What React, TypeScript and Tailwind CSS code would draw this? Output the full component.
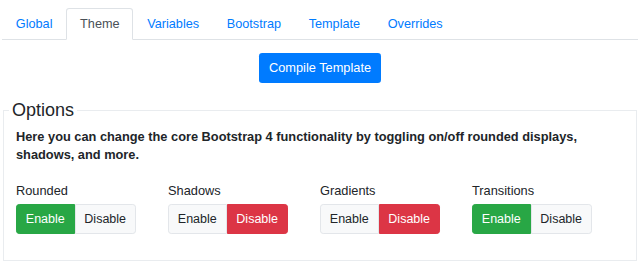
import React from "react";

const font = { fontFamily: '"Liberation Sans", Arial, sans-serif' };

function Group({ label, enabled }: { label: string; enabled: boolean }) {
  return (
    <div className="flex flex-col">
      <div className="text-[12.8px] leading-[19px] text-[#212529] mb-[4px]">{label}</div>
      <div className="flex">
        <button
          className={
            "h-[30px] px-[8.8px] text-[12.5px] rounded-l-[3.2px] border " +
            (enabled
              ? "bg-[#28a745] border-[#28a745] text-white"
              : "bg-[#f8f9fa] border-[#e3e6ea] text-[#212529]")
          }
        >
          Enable
        </button>
        <button
          className={
            "h-[30px] px-[8.8px] text-[12.5px] rounded-r-[3.2px] border " +
            (!enabled
              ? "bg-[#dc3545] border-[#dc3545] text-white"
              : "bg-[#f8f9fa] border-[#e3e6ea] text-[#212529]")
          }
        >
          Disable
        </button>
      </div>
    </div>
  );
}

export default function App() {
  const tabs = ["Global", "Theme", "Variables", "Bootstrap", "Template", "Overrides"];
  return (
    <div className="w-[640px] h-[264px] bg-white overflow-hidden px-[2px] pt-[8px]" style={font}>
      <div className="flex border-b border-[#dee2e6]">
        {tabs.map((t) => (
          <div
            key={t}
            className={
              "h-[32px] px-[12.8px] pt-[2px] -mb-px flex items-center text-[12.7px] border rounded-t-[3.2px] " +
              (t === "Theme"
                ? "border-[#dee2e6] border-b-white bg-white text-[#495057]"
                : "border-transparent text-[#007bff]")
            }
          >
            {t}
          </div>
        ))}
      </div>
      <div className="flex justify-center mt-[13px]">
        <button className="h-[30px] px-[10px] text-[12.8px] text-white bg-[#007bff] rounded-[3.2px]">
          Compile Template
        </button>
      </div>
      <fieldset className="mx-px mt-[17px] border border-[#e9ecef] pb-[26px] min-w-0">
        <legend className="ml-[5px] px-[3px] text-[18px] leading-[20px] text-[#212529]">Options</legend>
        <div className="px-[12px]">
          <p className="text-[12.8px] font-bold leading-[18px] text-[#212529] mt-[8px]">
            Here you can change the core Bootstrap 4 functionality by toggling on/off rounded displays, shadows, and more.
          </p>
          <div className="grid grid-cols-4 mt-[17px]">
            <Group label="Rounded" enabled={true} />
            <Group label="Shadows" enabled={false} />
            <Group label="Gradients" enabled={false} />
            <Group label="Transitions" enabled={true} />
          </div>
        </div>
      </fieldset>
    </div>
  );
}
